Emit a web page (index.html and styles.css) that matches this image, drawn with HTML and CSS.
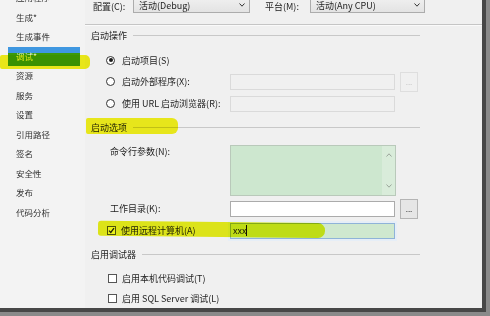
FILE: index.html
```html
<!DOCTYPE html>
<html lang="zh-CN">
<head>
    <meta charset="UTF-8">
    <meta name="viewport" content="width=device-width, initial-scale=1.0">
    <title>调试 - 项目属性</title>
    <link rel="stylesheet" href="styles.css">
</head>
<body>
    <div class="window">
        <nav class="tabs">
            <ul>
                <li>应用程序</li>
                <li>生成*</li>
                <li>生成事件</li>
                <li class="active">调试*</li>
                <li>资源</li>
                <li>服务</li>
                <li>设置</li>
                <li>引用路径</li>
                <li>签名</li>
                <li>安全性</li>
                <li>发布</li>
                <li>代码分析</li>
            </ul>
        </nav>

        <main class="page">
            <div class="toolbar">
                <span class="tb-label">配置(C):</span>
                <div class="select cfg">
                    <span>活动(Debug)</span>
                    <svg width="6" height="4" viewBox="0 0 6 4"><polyline points="0.5,0.5 3,3.2 5.5,0.5" fill="none" stroke="#333" stroke-width="1"/></svg>
                </div>
                <span class="tb-label plat">平台(M):</span>
                <div class="select plat-select">
                    <span>活动(Any CPU)</span>
                    <svg width="6" height="4" viewBox="0 0 6 4"><polyline points="0.5,0.5 3,3.2 5.5,0.5" fill="none" stroke="#333" stroke-width="1"/></svg>
                </div>
            </div>
            <div class="sep"></div>

            <h3 class="group first">启动操作</h3>
            <div class="row radio-row r1">
                <div class="opt"><span class="radio checked"></span><span>启动项目(S)</span></div>
            </div>
            <div class="row radio-row">
                <div class="opt"><span class="radio"></span><span>启动外部程序(X):</span></div>
                <div class="field disabled"></div>
                <div class="browse disabled">...</div>
            </div>
            <div class="row radio-row">
                <div class="opt"><span class="radio"></span><span>使用 URL 启动浏览器(R):</span></div>
                <div class="field disabled"></div>
            </div>

            <h3 class="group options">启动选项</h3>
            <div class="row args-row">
                <div class="label">命令行参数(N):</div>
                <div class="textarea">
                    <div class="scroll">
                        <svg width="6" height="4" viewBox="0 0 6 4"><polyline points="0.5,3.5 3,0.8 5.5,3.5" fill="none" stroke="#9aa59a" stroke-width="1"/></svg>
                        <svg width="6" height="4" viewBox="0 0 6 4"><polyline points="0.5,0.5 3,3.2 5.5,0.5" fill="none" stroke="#9aa59a" stroke-width="1"/></svg>
                    </div>
                </div>
            </div>
            <div class="row dir-row">
                <div class="label">工作目录(K):</div>
                <div class="field"></div>
                <div class="browse">...</div>
            </div>
            <div class="row remote-row">
                <div class="opt cb"><span class="check checked"><svg width="7" height="7" viewBox="0 0 7 7"><polyline points="1,3.6 2.8,5.4 6,1.2" fill="none" stroke="#222" stroke-width="1.3"/></svg></span><span>使用远程计算机(A)</span></div>
                <div class="field remote"><span class="value">xxx</span><span class="caret"></span></div>
            </div>

            <h3 class="group debuggers">启用调试器</h3>
            <div class="row cb-row c1">
                <div class="opt cb"><span class="check"></span><span>启用本机代码调试(T)</span></div>
            </div>
            <div class="row cb-row">
                <div class="opt cb"><span class="check"></span><span>启用 SQL Server 调试(L)</span></div>
            </div>
        </main>

        <!-- highlighter marks drawn over the screenshot -->
        <div class="hl hl-tab"></div>
        <div class="hl hl-options"></div>
        <div class="hl hl-remote"></div>
    </div>
</body>
</html>
```

FILE: styles.css
```css
* {
    margin: 0;
    padding: 0;
    box-sizing: border-box;
}

body {
    width: 490px;
    height: 316px;
    background: #8a8a8a;
    font-family: "Noto Sans CJK SC", "Noto Sans", sans-serif;
    font-size: 9px;
    color: #1e1e1e;
    overflow: hidden;
}

.window {
    position: relative;
    width: 486px;
    height: 312px;
    display: flex;
    background: #f0f0f0;
    border-right: 4px solid #474747;
    border-bottom: 4px solid #474747;
    overflow: hidden;
}

/* Left tab list */
.tabs {
    width: 85px;
    flex-shrink: 0;
    background: #f3f3f3;
}

.tabs ul {
    list-style: none;
    margin-top: -12px;
}

.tabs li {
    height: 19.5px;
    line-height: 19.5px;
    padding-left: 16px;
    font-size: 8.5px;
    color: #333;
    position: relative;
    z-index: 1;
}

.tabs li.active {
    margin-left: 8px;
    width: 72px;
    padding-left: 8px;
    color: #eaf5dc;
    background: linear-gradient(#3f97e0 0 6px, #3c9a08 6px);
    clip-path: polygon(0 0, 100% 0, 100% 35%, 104% 50%, 100% 60%, 100% 100%, 0 100%);
}

/* Main page */
.page {
    flex: 1;
    display: flex;
    flex-direction: column;
}

.toolbar {
    height: 13px;
    display: flex;
    align-items: center;
    padding-left: 8px;
}

.tb-label {
    width: 40px;
}

.tb-label.plat {
    width: 45px;
    margin-left: 15px;
}

.select {
    width: 117px;
    height: 16px;
    margin-top: -3px;
    display: flex;
    align-items: center;
    justify-content: space-between;
    padding: 0 4px 0 5px;
    background: linear-gradient(#f0f0f0, #e3e3e3);
    border: 1px solid #acacac;
}

.select.plat-select {
    width: 115px;
}

.sep {
    margin-top: 11px;
    height: 2px;
    border-top: 1px solid #c5c5c5;
    border-bottom: 1px solid #fafafa;
}

.group {
    font-weight: normal;
    font-size: 9px;
    height: 14px;
    width: 335px;
    padding-left: 6px;
    display: flex;
    align-items: center;
    gap: 6px;
    color: #1e1e1e;
}

.group::after {
    content: "";
    flex: 1;
    height: 1px;
    background: #c8c8c8;
}

.group.first { margin-top: 3px; }
.group.options { margin-top: 7px; }
.group.debuggers { margin-top: 8px; }

.row {
    display: flex;
    align-items: center;
    height: 21px;
}

.row.r1 { margin-top: 7px; }
.radio-row + .radio-row { margin-top: 1px; }

.opt {
    width: 145px;
    padding-left: 21px;
    display: flex;
    align-items: center;
    gap: 7px;
}

.opt.cb {
    padding-left: 23px;
    gap: 5px;
}

.radio {
    width: 9px;
    height: 9px;
    border: 1px solid #333;
    border-radius: 50%;
    background: #fff;
    display: flex;
    align-items: center;
    justify-content: center;
}

.radio.checked::after {
    content: "";
    width: 4px;
    height: 4px;
    border-radius: 50%;
    background: #1a1a1a;
}

.check {
    width: 9px;
    height: 9px;
    border: 1px solid #555;
    background: #fff;
    display: flex;
    align-items: center;
    justify-content: center;
}

.label {
    width: 145px;
    padding-left: 25px;
    line-height: 14px;
}

.field {
    width: 165px;
    height: 16px;
    background: #fff;
    border: 1px solid #ababab;
}

.field.disabled {
    background: #f0f0f0;
    border-color: #dadada;
}

.browse {
    width: 18px;
    height: 20px;
    margin-left: 5px;
    border: 1px solid #b4b4b4;
    background: #e6e6e6;
    display: flex;
    align-items: center;
    justify-content: center;
    font-size: 8px;
    line-height: 1;
    color: #222;
}

.browse.disabled {
    border-color: #dedede;
    background: #f0f0f0;
    color: #c4c4c4;
}

.args-row {
    height: 51px;
    margin-top: 10px;
    align-items: flex-start;
}

.textarea {
    width: 166px;
    height: 51px;
    background: #cde7cf;
    border: 1px solid #b9c9ba;
    display: flex;
    justify-content: flex-end;
}

.scroll {
    width: 13px;
    background: #d9ecda;
    display: flex;
    flex-direction: column;
    justify-content: space-between;
    align-items: center;
    padding: 7px 0 7px;
}

.dir-row {
    height: 20px;
    margin-top: 3px;
}

.remote-row {
    height: 18px;
    margin-top: 3px;
}

.opt.cb .check.checked {
    margin-left: -1px;
}

.field.remote {
    background: #cfe8cf;
    border-color: #8fb3d8;
    box-shadow: 0 0 0 2px #e6eef7;
    display: flex;
    align-items: center;
    padding-left: 2px;
}

.caret {
    width: 1px;
    height: 11px;
    background: #111;
}

.cb-row {
    height: 20px;
}

.cb-row.c1 { margin-top: 7px; }

/* highlighter strokes */
.hl {
    position: absolute;
    mix-blend-mode: multiply;
    z-index: 5;
    pointer-events: none;
}

.hl-tab {
    left: 0;
    top: 55px;
    width: 90px;
    height: 14px;
    background: #f4f21a;
    border-radius: 2px 5px 5px 2px;
}

.hl-options {
    left: 86px;
    top: 118px;
    width: 92px;
    height: 16px;
    background: #f6f51c;
    border-radius: 2px 6px 6px 2px;
}

.hl-remote {
    left: 98px;
    top: 222px;
    width: 227px;
    height: 15px;
    background: #eaf21a;
    border-radius: 3px 7px 7px 3px;
    transform: rotate(0.6deg);
}
```
